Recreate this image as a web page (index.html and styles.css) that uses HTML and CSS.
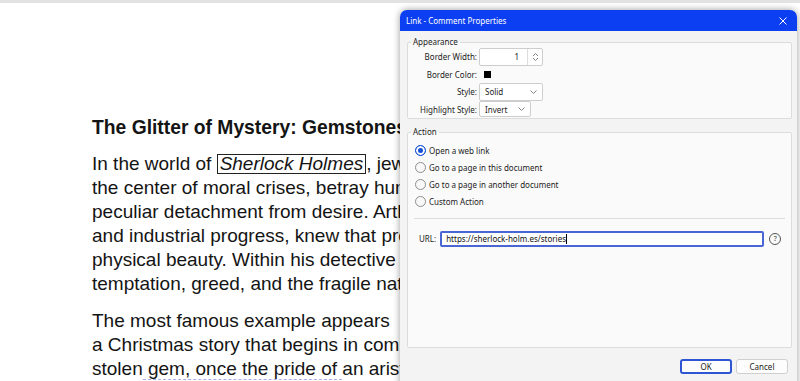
FILE: index.html
```html
<!DOCTYPE html>
<html lang="en">
<head>
  <meta charset="UTF-8" />
  <meta name="viewport" content="width=device-width, initial-scale=1.0"/>
  <title>Link - Comment Properties</title>
  <link rel="stylesheet" href="styles.css">
</head>
<body>

  <div class="topbar"></div>

  <!-- Document page (the part left of the dialog) -->
  <div class="page">
    <h1>The Glitter of Mystery: Gemstones</h1>
    <p>
      <span class="line">In the world of <span class="linkbox">Sherlock Holmes</span>, jewels</span>
      <span class="line">the center of moral crises, betray human</span>
      <span class="line">peculiar detachment from desire. Arthur</span>
      <span class="line">and industrial progress, knew that precious</span>
      <span class="line">physical beauty. Within his detective</span>
      <span class="line">temptation, greed, and the fragile nature</span>
    </p>
    <p>
      <span class="line">The most famous example appears</span>
      <span class="line">a Christmas story that begins in comic</span>
      <span class="line">stolen<span class="mark"> gem, once the pride of </span>an aristocratic</span>
    </p>
  </div>

  <!-- Dialog -->
  <div class="dialog">
    <div class="titlebar">
      <span class="title">Link - Comment Properties</span>
      <svg class="close" viewBox="0 0 8 8" width="8" height="8">
        <path d="M0.5 0.5 L7.5 7.5 M7.5 0.5 L0.5 7.5" stroke="#fff" stroke-width="1" fill="none"/>
      </svg>
    </div>

    <div class="dialog-body">
      <fieldset class="group appearance">
        <legend>Appearance</legend>
        <div class="form-grid">
          <label>Border Width:</label>
          <div class="spin">
            <span class="spin-value">1</span>
            <span class="spin-btn">
              <svg viewBox="0 0 7 10" width="7" height="10">
                <path d="M1 4 L3.5 1.5 L6 4 M1 6 L3.5 8.5 L6 6" stroke="#777" stroke-width="0.9" fill="none"/>
              </svg>
            </span>
          </div>

          <label>Border Color:</label>
          <div class="color-cell"><span class="swatch"></span></div>

          <label>Style:</label>
          <div class="select select-style">
            <span>Solid</span>
            <svg viewBox="0 0 7 4" width="7" height="4"><path d="M0.5 0.5 L3.5 3.5 L6.5 0.5" stroke="#777" stroke-width="0.9" fill="none"/></svg>
          </div>

          <label>Highlight Style:</label>
          <div class="select select-highlight">
            <span>Invert</span>
            <svg viewBox="0 0 7 4" width="7" height="4"><path d="M0.5 0.5 L3.5 3.5 L6.5 0.5" stroke="#777" stroke-width="0.9" fill="none"/></svg>
          </div>
        </div>
      </fieldset>

      <fieldset class="group action">
        <legend>Action</legend>
        <div class="radio-list">
          <div class="radio checked"><span class="dot"></span>Open a web link</div>
          <div class="radio"><span class="dot"></span>Go to a page in this document</div>
          <div class="radio"><span class="dot"></span>Go to a page in another document</div>
          <div class="radio"><span class="dot"></span>Custom Action</div>
        </div>
        <div class="sep"></div>
        <div class="url-row">
          <span class="url-label">URL:</span>
          <div class="url-input">https://sherlock-holm.es/stories<span class="caret"></span></div>
          <span class="help">?</span>
        </div>
      </fieldset>

      <div class="buttons">
        <button class="btn btn-default">OK</button>
        <button class="btn">Cancel</button>
      </div>
    </div>
  </div>

</body>
</html>
```

FILE: styles.css
```css
html, body {
  margin: 0;
  overflow: hidden;
}

body {
  position: relative;
  width: 800px;
  height: 381px;
  background-color: #ffffff;
  font-family: "Liberation Sans", Arial, sans-serif;
  color: #141414;
}

.topbar {
  height: 3px;
  background-color: #e2e2e2;
}

/* Document */
.page {
  width: 308px;
  overflow: hidden;
  padding: 113px 0 0 92px;
}

h1 {
  margin: 0 0 12px 0;
  font-size: 19.3px;
  line-height: 24px;
  font-weight: bold;
  white-space: nowrap;
}

p {
  margin: 0 0 13px 0;
  font-size: 19px;
  line-height: 24px;
}

.line {
  display: block;
  white-space: nowrap;
}

.linkbox {
  display: inline-block;
  font-style: italic;
  line-height: 18px;
  padding: 0 2px;
  border: 1px solid #222;
}

.mark {
  border-bottom: 1px dashed #9fb2e8;
}

/* Dialog */
.dialog {
  position: absolute;
  left: 400px;
  top: 10px;
  width: 397px;
  height: 380px;
  background-color: #f3f3f3;
  border-radius: 7px 7px 0 0;
  box-shadow: 0 0 7px rgba(0, 0, 0, 0.4);
  font-family: "Noto Sans", sans-serif;
  font-size: 8px;
  color: #1c1c1c;
}

.titlebar {
  height: 21px;
  display: flex;
  align-items: center;
  justify-content: space-between;
  padding: 0 10px 0 6px;
  background-color: #0d3ff2;
  border-radius: 7px 7px 0 0;
  color: #ffffff;
}

.close {
  display: block;
}

.dialog-body {
  padding: 5px 5px 0 7px;
}

.group {
  margin: 0;
  padding: 0 3px;
  border: 1px solid #dcdcdc;
  border-radius: 2px;
  background-color: #fafafa;
}

.group legend {
  padding: 0 2px;
  line-height: 12px;
}

.form-grid {
  display: grid;
  grid-template-columns: 66px auto;
  grid-auto-rows: 17.5px;
  column-gap: 2px;
  align-items: center;
  justify-items: start;
}

.form-grid label {
  justify-self: end;
}

.spin {
  width: 64px;
  height: 18px;
  display: flex;
  box-sizing: border-box;
  border: 1px solid #cdcdcd;
  border-radius: 2px;
  background-color: #ffffff;
}

.spin-value {
  flex: 1;
  text-align: right;
  padding-right: 8px;
  line-height: 16px;
}

.spin-btn {
  width: 14px;
  display: flex;
  align-items: center;
  justify-content: center;
  border-left: 1px solid #dddddd;
}

.color-cell {
  padding-left: 5px;
  display: flex;
  align-items: center;
}

.swatch {
  width: 7px;
  height: 7px;
  background-color: #000;
}

.select {
  height: 18px;
  display: flex;
  align-items: center;
  justify-content: space-between;
  box-sizing: border-box;
  padding: 0 5px 0 5px;
  border: 1px solid #cdcdcd;
  border-radius: 2px;
  background-color: #ffffff;
}

.select-style {
  width: 64px;
}

.select-highlight {
  width: 52px;
  height: 16px;
}

.action {
  margin-top: 7px;
  height: 222px;
  box-sizing: border-box;
  padding: 4px 3px 0 3px;
}

.radio {
  height: 17px;
  display: flex;
  align-items: center;
  gap: 3px;
  margin-left: 4px;
}

.dot {
  width: 11px;
  height: 11px;
  box-sizing: border-box;
  border-radius: 50%;
  border: 1px solid #8e8e8e;
  background-color: #f8f8f8;
}

.radio.checked .dot {
  border-color: #1450d8;
  background-color: #1450d8;
  box-shadow: inset 0 0 0 2px #ffffff;
}

.sep {
  margin: 8px 3px 0 3px;
  border-top: 1px solid #dcdcdc;
}

.url-row {
  display: flex;
  align-items: center;
  gap: 4px;
  margin-top: 12px;
  padding-left: 8px;
}

.url-label {
  line-height: 12px;
}

.url-input {
  width: 324px;
  height: 16px;
  box-sizing: border-box;
  display: flex;
  align-items: center;
  padding-left: 4px;
  border: 2px solid #4a66d4;
  border-radius: 2px;
  background-color: #ffffff;
  color: #111;
  line-height: 12px;
}

.caret {
  width: 1px;
  height: 10px;
  background-color: #000;
}

.help {
  width: 10px;
  height: 10px;
  margin-left: 1px;
  border: 1px solid #555;
  border-radius: 50%;
  font-size: 7px;
  line-height: 10px;
  text-align: center;
  color: #333;
}

.buttons {
  display: flex;
  justify-content: flex-end;
  gap: 4px;
  margin-top: 11px;
  padding-right: 4px;
}

.btn {
  width: 52px;
  height: 15px;
  padding: 0;
  box-sizing: border-box;
  font-family: "Noto Sans", sans-serif;
  font-size: 8px;
  color: #1c1c1c;
  background-color: #fdfdfd;
  border: 1px solid #cfcfcf;
  border-radius: 3px;
}

.btn-default {
  border: 2px solid #2f55d4;
}
```
